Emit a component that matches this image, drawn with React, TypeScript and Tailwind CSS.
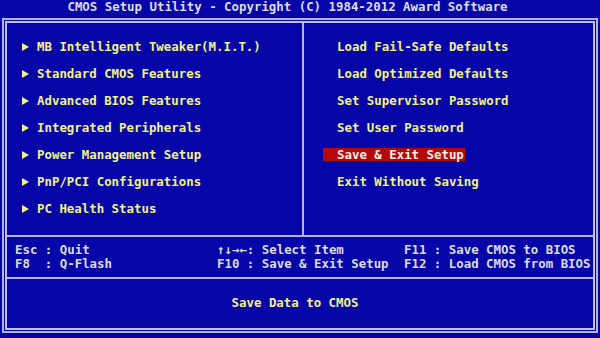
import React from "react";

const leftItems = [
  "MB Intelligent Tweaker(M.I.T.)",
  "Standard CMOS Features",
  "Advanced BIOS Features",
  "Integrated Peripherals",
  "Power Management Setup",
  "PnP/PCI Configurations",
  "PC Health Status",
];

const rightItems = [
  "Load Fail-Safe Defaults",
  "Load Optimized Defaults",
  "Set Supervisor Password",
  "Set User Password",
  "Save & Exit Setup",
  "Exit Without Saving",
];

function Arrow() {
  return (
    <span className="inline-flex w-[15px] h-[27px] items-center">
      <svg width="7" height="8" viewBox="0 0 7 8">
        <path d="M0 0 L7 4 L0 8 Z" fill="#f2f28a" />
      </svg>
    </span>
  );
}

export default function App() {
  return (
    <div
      className="w-[600px] h-[338px] bg-[#0606a8] overflow-hidden font-bold text-[12.4px] whitespace-pre"
      style={{ fontFamily: '"DejaVu Sans Mono", "Liberation Mono", monospace' }}
    >
      <div className="h-[18px] leading-[14px] pr-[25px] text-center text-[#dcdcec]">
        CMOS Setup Utility - Copyright (C) 1984-2012 Award Software
      </div>
      <div className="ml-[2px] w-[596px] h-[315px] border-2 border-[#b4b4e4] p-px">
        <div className="h-full border-2 border-[#c0c0ec] flex flex-col">
          <div className="flex h-[214px] border-b-2 border-[#b4b4e4]">
            <div className="w-[297px] border-r-2 border-[#b4b4e4] pl-[15px] pt-[10px] text-[#f2f28a]">
              {leftItems.map((t) => (
                <div key={t} className="h-[27px] leading-[27px] flex items-center">
                  <Arrow />
                  <span>{t}</span>
                </div>
              ))}
            </div>
            <div className="flex-1 pl-[19px] pt-[10px] text-[#f2f28a]">
              {rightItems.map((t) => (
                <div key={t} className="h-[27px] flex items-center">
                  {t === "Save & Exit Setup" ? (
                    <span className="inline-block h-[13px] leading-[13px] pl-[14px] pr-[1px] bg-[#b20a0a] text-[#f4f0e8]">
                      {t}
                    </span>
                  ) : (
                    <span className="pl-[14px] leading-[27px]">{t}</span>
                  )}
                </div>
              ))}
            </div>
          </div>
          <div className="h-[42px] border-b-2 border-[#b4b4e4] flex pl-[8px] pt-[6px] text-[#dcdcec] leading-[14px]">
            <div className="w-[202px]">
              <div>Esc : Quit</div>
              <div>F8  : Q-Flash</div>
            </div>
            <div className="w-[187px]">
              <div>↑↓→←: Select Item</div>
              <div>F10 : Save &amp; Exit Setup</div>
            </div>
            <div className="flex-1">
              <div>F11 : Save CMOS to BIOS</div>
              <div>F12 : Load CMOS from BIOS</div>
            </div>
          </div>
          <div className="flex-1 flex items-center justify-center pr-[10px] text-[#f2f28a]">
            Save Data to CMOS
          </div>
        </div>
      </div>
    </div>
  );
}
